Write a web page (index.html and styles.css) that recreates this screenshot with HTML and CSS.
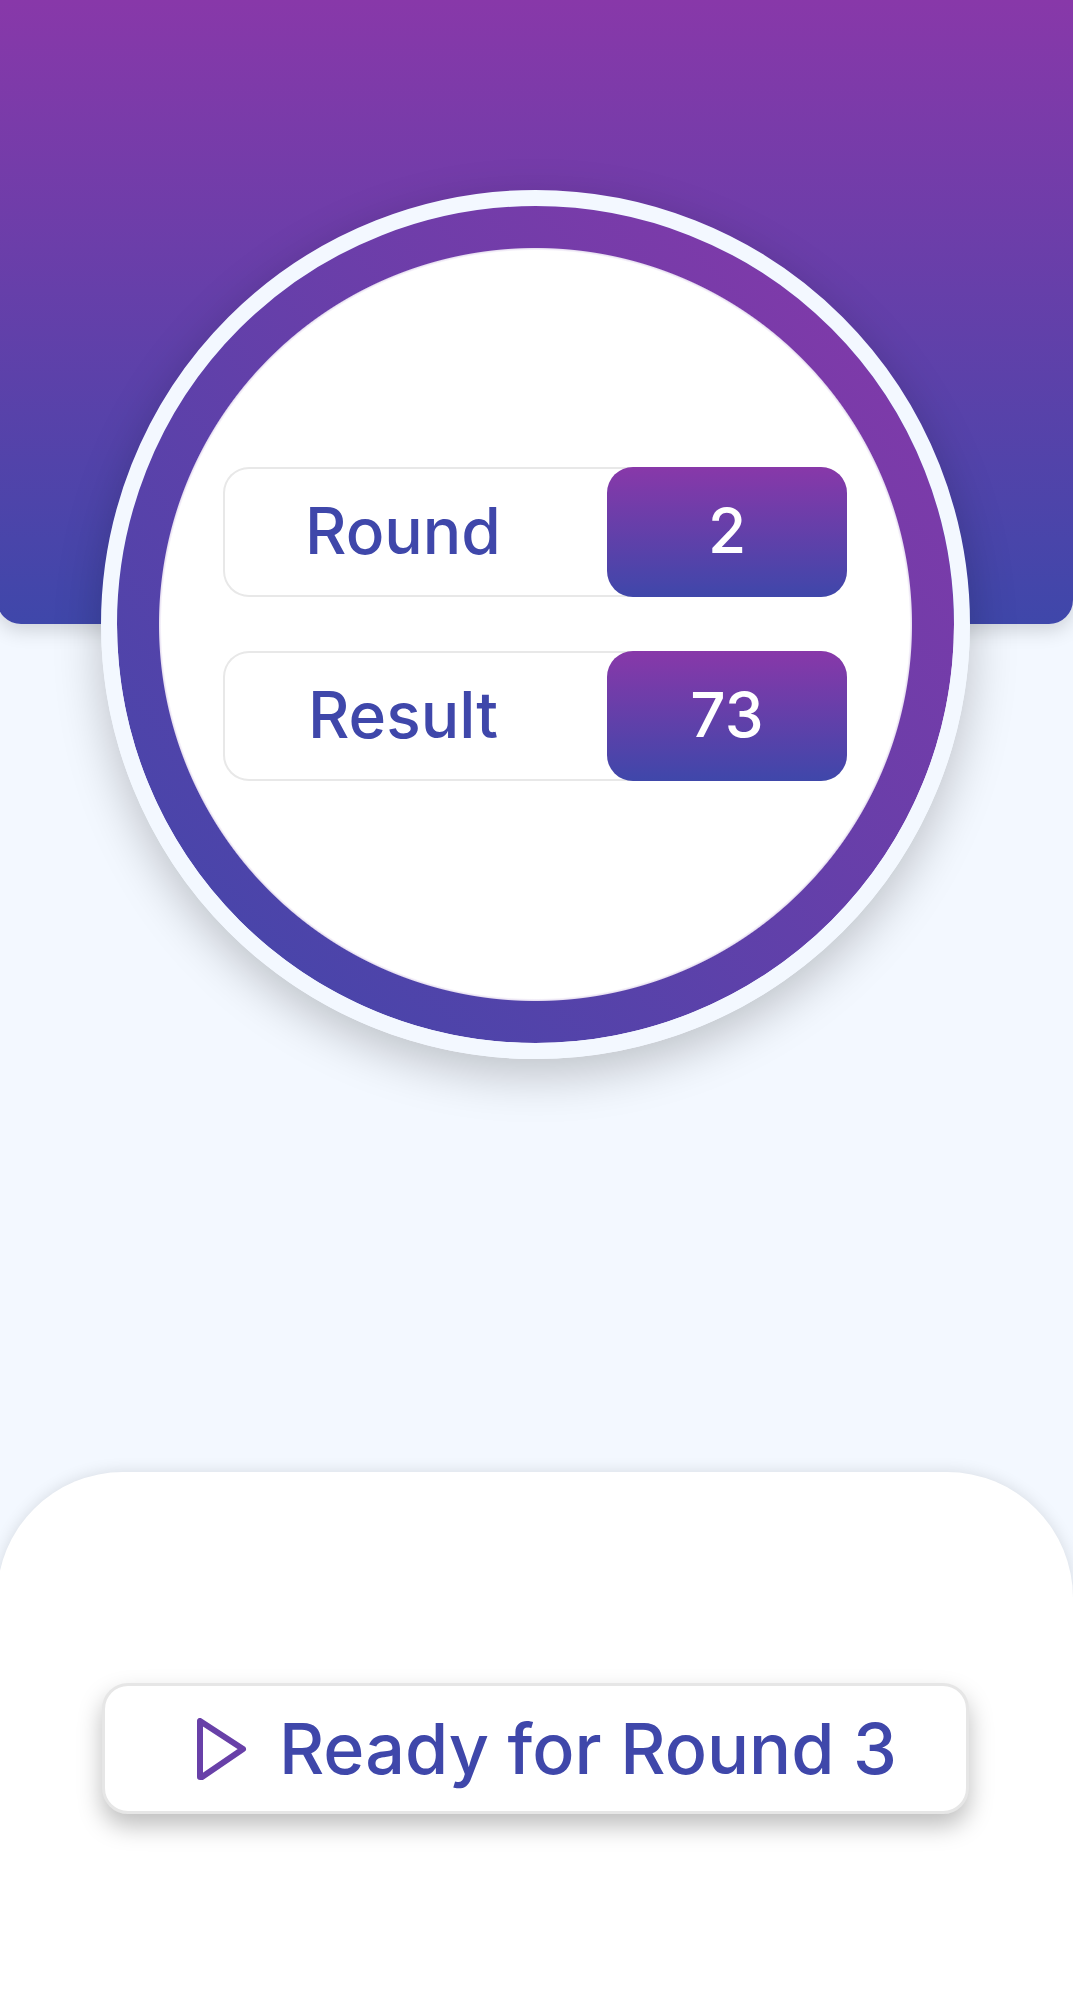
FILE: index.html
```html
<!DOCTYPE html>
<html lang="en">
<head>
<meta charset="utf-8">
<meta name="viewport" content="width=device-width, initial-scale=1">
<title>Round result</title>
<link rel="stylesheet" href="styles.css">
</head>
<body>
<div class="app">
  <header class="banner"></header>
  <main class="ring">
    <dl class="scores">
      <div class="score">
        <dt class="score-label">Round</dt>
        <dd class="score-value">2</dd>
      </div>
      <div class="score">
        <dt class="score-label">Result</dt>
        <dd class="score-value">73</dd>
      </div>
    </dl>
  </main>
  <footer class="sheet">
    <button class="ready" type="button">
      <svg class="play" viewBox="0 0 50 62" aria-hidden="true">
        <path d="M3 3V59H5L46 31Z" fill="none" stroke="#6840a8" stroke-width="6" stroke-linejoin="round"/>
      </svg>
      <span>Ready for Round 3</span>
    </button>
  </footer>
</div>
</body>
</html>
```
FILE: styles.css
```css
:root {
  --violet: #8838a9;
  --indigo: #3f47aa;
  --mist: #f3f8ff;
  --line: #e8e8e8;
  --ring: min(81vw, 869px);
}

* {
  box-sizing: border-box;
}

body {
  margin: 0;
  overflow-x: hidden;
  background: var(--mist);
  font-family: Inter, "Open Sans", sans-serif;
  font-weight: 500;
  color: var(--indigo);
}

.app {
  display: flex;
  flex-direction: column;
  min-height: 100vh;
  margin-left: -3px;
}

.banner {
  height: 624px;
  border-radius: 0 0 24px 24px;
  background: linear-gradient(var(--violet), var(--indigo));
  box-shadow: 0 6px 20px rgba(0, 0, 0, 0.16);
}

.ring {
  display: flex;
  align-items: center;
  justify-content: center;
  align-self: center;
  flex: none;
  width: var(--ring);
  aspect-ratio: 1;
  margin-top: calc(var(--ring) / -2);
  border: 16px solid var(--mist);
  border-radius: 50%;
  background:
    radial-gradient(closest-side, #fff 374px, #e8e0f2 376px, transparent 377px),
    linear-gradient(225deg, var(--violet), var(--indigo));
  background-origin: padding-box;
  background-clip: padding-box;
  box-shadow: 0 16px 48px rgba(0, 0, 0, 0.22);
}

.scores {
  display: flex;
  flex-direction: column;
  gap: 54px;
  width: 624px;
  max-width: 76%;
  margin: 0;
  font-size: 62px;
  line-height: 76px;
  text-align: center;
}

.score {
  display: flex;
  height: 130px;
  border-radius: 26px;
  box-shadow: inset 0 0 0 2px var(--line);
}

.score-label {
  flex: 3;
  padding: 26px 24px 28px 0;
  font-size: 64px;
}

.score-value {
  flex: 2;
  margin: 0;
  padding: 26px 0 28px;
  border-radius: 26px;
  background: linear-gradient(var(--violet), var(--indigo));
  color: #fff;
}

.sheet {
  display: flex;
  flex-direction: column;
  align-items: center;
  height: 543px;
  margin-top: auto;
  padding-top: 211px;
  border-radius: 126px 126px 0 0;
  background: #fff;
  box-shadow: 0 0 16px rgba(0, 0, 0, 0.12);
}

.ready {
  display: flex;
  align-items: center;
  justify-content: center;
  gap: 32px;
  width: min(81%, 867px);
  height: 131px;
  padding: 0 0 0 24px;
  border: 3px solid #e6e6e6;
  border-radius: 26px;
  background: #fff;
  box-shadow: 0 12px 24px rgba(0, 0, 0, 0.26);
  color: inherit;
  font: inherit;
  font-size: 70px;
  line-height: 84px;
  white-space: nowrap;
}

.play {
  flex: none;
  width: 50px;
  height: 62px;
}
```
